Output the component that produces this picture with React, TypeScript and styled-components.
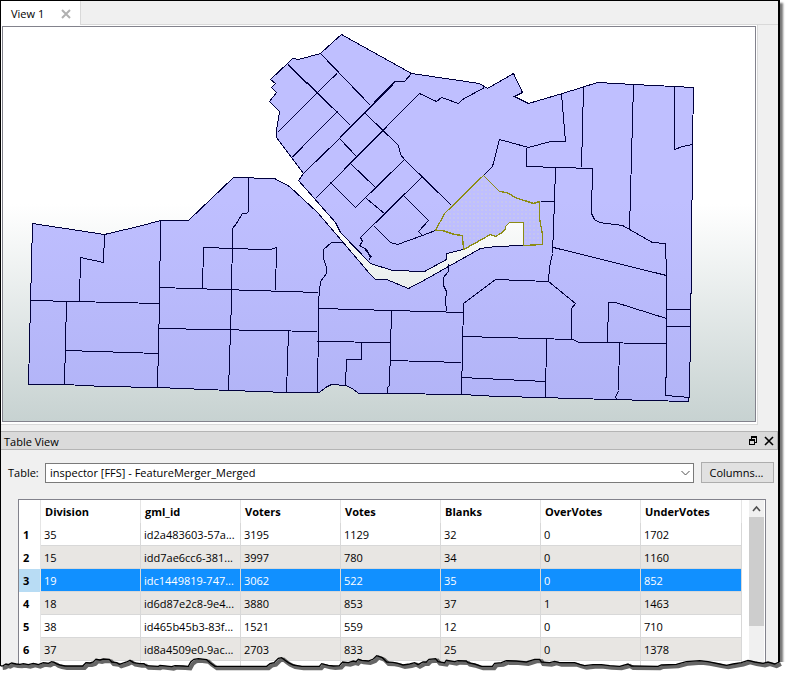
import React from 'react';
import styled, { createGlobalStyle } from 'styled-components';

const GlobalStyle = createGlobalStyle`
  * { box-sizing: border-box; }
  body { margin: 0; background: #fff; overflow-x: hidden; }
  body, button, select, input { font-family: 'Open Sans', 'Noto Sans', sans-serif; font-size: 11px; line-height: 16px; color: #000; }
`;

const Page = styled.main`
  position: relative;
  padding-right: 6px;
`;

const Window = styled.div`
  background: #f0f0f0;
  border: solid #000;
  border-width: 1px 2px 0 1px;
  box-shadow: 3px 3px 2px #777;
`;

const TabBar = styled.div`
  display: flex;
  height: 24px;
  border-bottom: 1px solid #d9d9d9;
`;

const Tab = styled.div`
  display: flex;
  align-items: center;
  justify-content: space-between;
  width: 80px;
  height: 24px;
  padding: 2px 9px 0 10px;
  background: #fff;
  border-right: 1px solid #d9d9d9;
`;

const TabButton = styled.button`
  padding: 0;
  border: 0;
  background: none;
`;

const IconButton = styled.button`
  display: flex;
  align-items: center;
  justify-content: center;
  width: 10px;
  height: 10px;
  padding: 0;
  border: 0;
  background: none;
`;

const ViewPane = styled.section`
  margin-right: 20px;
  padding: 1px 1px 2px;
  background: #fff;
  border-right: 1px solid #d9d9d9;
  border-bottom: 1px solid #d9d9d9;
`;

const Canvas = styled.div`
  border: 1px solid #82828c;
  background: linear-gradient(#fff 45%, #c7d2d1);
`;

const MapDrawing = styled.svg`
  display: block;
  width: 100%;
  height: auto;
`;

const DockTitle = styled.header`
  display: flex;
  align-items: center;
  justify-content: space-between;
  height: 19px;
  margin-top: 6px;
  padding: 0 3px;
  background: #dadada;
  border: solid #b4b4b4;
  border-width: 1px 1px 1px 0;
`;

const DockName = styled.h2`
  margin: 2px 0 0;
  font-size: 11px;
  font-weight: 400;
`;

const DockButtons = styled.div`
  display: flex;
  gap: 6px;
`;

const Toolbar = styled.div`
  display: flex;
  align-items: center;
  margin: 12px 4px 0 7px;
  height: 21px;
`;

const FieldLabel = styled.label`
  width: 37px;
`;

const SelectWrap = styled.div`
  position: relative;
  flex: 1;
`;

const TableSelect = styled.select`
  display: block;
  appearance: none;
  width: 100%;
  height: 20px;
  padding: 1px 20px 0 4px;
  border: 1px solid #7a7a7a;
  border-radius: 0;
  background: #fff;
`;

const SelectArrow = styled.svg`
  position: absolute;
  right: 4px;
  top: 7px;
  pointer-events: none;
`;

const ColumnsButton = styled.button`
  width: 73px;
  height: 21px;
  margin-left: 7px;
  padding: 0 2px 0 0;
  border: 1px solid #adadad;
  background: #e1e1e1;
`;

const GridFrame = styled.div`
  display: flex;
  margin: 16px 12px 0 17px;
  height: 172px;
  overflow: hidden;
  border: solid #82828c;
  border-width: 1px 1px 0;
  background: #fff;
`;

const GridArea = styled.div`
  flex: 1;
  overflow: hidden;
`;

const Grid = styled.table`
  table-layout: fixed;
  width: 723px;
  border-collapse: separate;
  border-spacing: 0;
`;

const SizedCol = styled.col<{ $width?: number }>`
  width: ${p => (p.$width ? `${p.$width}px` : 'auto')};
`;

const ColumnHead = styled.th`
  height: 23px;
  padding: 1px 4px 0;
  border-right: 1px solid #e5e5e5;
  font-weight: 700;
  text-align: left;
`;

const Row = styled.tr<{ $shaded?: boolean; $selected?: boolean }>`
  background: ${p => (p.$selected ? '#1190ff' : p.$shaded ? '#e8e6e3' : '#fff')};
  color: ${p => (p.$selected ? '#fff' : '#000')};
`;

const RowHead = styled.th<{ $selected?: boolean }>`
  height: 23px;
  padding: 0 6px 0 4px;
  border-right: 1px solid #e5e5e5;
  background: ${p => (p.$selected ? '#b8dcf4' : '#fff')};
  color: #000;
  font-weight: 700;
  text-align: left;
`;

const Cell = styled.td`
  height: 23px;
  padding: 1px 3px 0;
  border: solid #d8d8d8;
  border-width: 0 1px 1px 0;
  overflow: hidden;
  white-space: nowrap;
`;

const ScrollBar = styled.div`
  width: 16px;
  border-right: 1px solid #fff;
  background: #f0f0f0;
`;

const ScrollUp = styled.button`
  display: flex;
  align-items: center;
  justify-content: center;
  width: 15px;
  height: 17px;
  padding: 0;
  border: 0;
  background: #f0f0f0;
`;

const ScrollThumb = styled.div`
  height: 109px;
  background: #cdcdcd;
`;

const TornEdge = styled.svg`
  position: absolute;
  left: 0;
  bottom: -3px;
  width: 100%;
  height: 24px;
`;

const OUTLINE =
  'M32 223L104 234L142 225L160 220L188 220L233 177L274 178L289 186L317 212L341 240L369 273L375 279L386 279L408 288L425 279L448 266L480 248L495 246L523 245V222H509L505 226V229L500 233L495 236L490 234L465 248L463 249L446 253V259L424 271L392 270L370 263L340 232L335 222L298 180L303 173L291 157L276 137V130L279 111L269 101L276 92L271 87L275 83L270 79L287 63L292 58L298 59L320 53L333 41L341 34L411 73L479 83L487 88L513 73L522 92L514 96L528 103L562 93L597 82L633 84L674 86L693 87L692 143L691 260L690 328L689 397H688V401L647 400L615 399L570 398L545 397L497 396L461 394L387 393L358 393L352 388L345 385L331 384L325 387L319 392H287L230 390L157 387L103 386L64 384H28L30 303Z';

const BOUNDARIES = [
  'M104 234L103 262L80 257L79 301',
  'M31 300L159 303',
  'M66 302L64 384',
  'M66 350L158 353',
  'M160 220L159 303L157 387',
  'M159 287L318 292',
  'M202 288L203 247L262 249H270L276 247L275 290',
  'M248 177V211L246 213H242L236 223L232 228L231 300L228 390',
  'M159 328L317 331',
  'M288 331L286 392',
  'M342 242H331L323 249V258L326 267V273L320 281L318 300L318 323L317 392',
  'M319 308L463 312',
  'M317 341L390 342',
  'M391 310L389 385L387 387V393',
  'M361 342L361 359H346L345 385',
  'M390 360L461 362',
  'M461 394L463 303L495 279L548 281L575 303L571 308V339',
  'M463 336L572 339L579 342L666 343',
  'M461 377L545 381',
  'M546 339L545 397',
  'M607 342L608 302H615L666 318',
  'M619 342L618 390L615 397L617 399',
  'M666 309H690M666 326H690',
  'M689 397L665 395L666 360V274L665 243',
  'M553 247L666 275',
  'M555 167L554 201L552 253L549 267L548 281',
  'M540 201H554',
  'M448 263V271L443 277V285L446 291L445 300L446 311',
  'M561 93L565 141H550L528 147L499 139L492 166L483 175',
  'M526 147V166L592 168L591 213L594 219L599 222L622 225L629 229L652 242L665 243',
  'M583 87L581 167',
  'M633 84L629 229',
  'M674 86V149L682 146L692 144',
  'M435 230L422 235L397 244L390 242L374 226',
  'M422 235L418 231L428 220L404 196',
  'M422 176L360 237L362 241L359 245L366 249L370 257L368 260',
  'M451 205L404 159L400 154L398 145L365 113',
  'M404 159L355 207L330 182',
  'M350 163L375 187',
  'M366 198L385 214',
  'M315 198L419 93L436 101L441 97L458 103L462 99L484 87',
  'M411 73L404 81H394L339 138L303 173',
  'M339 138L356 156',
  'M287 63L350 125',
  'M320 53L370 105',
  'M336 73L277 132',
  'M337 111L291 157',
];

const ACCENTS = [
  'M288 65L307 83',
  'M394 82L340 137',
  'M373 139L344 169',
  'M336 74L332 78',
  'M302 147L292 157',
  'M385 213L375 223',
  'M365 249L371 257',
  'M418 231L422 235',
];

const SELECTED =
  'M483 175L499 191L506 192L517 198L524 200L533 203L539 201V218L542 234V244L523 245V222H509L505 226V229L500 233L495 236L490 234L465 248L463 249L462 235L454 234L442 230H435L444 213Z';

const TEAR: string =
  'M2 48L10 47L18 42L25 44L35 39L48 42L60 43L70 41L85 44L100 40L115 44L130 38L145 40L155 35L163 37L170 42L180 45L195 48L248 48L258 38L270 39L280 36L288 28L300 30L310 27L328 28L335 36L350 38L358 43L380 36L390 31L400 38L420 41L432 41L440 47L475 49L480 46L515 50L525 47L550 48L565 49L572 36L582 28L595 26L620 29L630 38L645 49L800 49L810 41L822 38L835 25L845 23L855 31L865 38L880 45L905 49L958 49L965 41L985 46L1000 48L1018 47L1028 36L1045 38L1060 33L1068 35L1075 28L1085 31L1105 33L1120 27L1130 17L1147 23L1160 36L1179 37L1194 40L1209 45L1229 42L1244 38L1254 44L1269 36L1279 36L1287 28L1307 26L1314 35L1334 38L1339 31L1364 35L1374 32L1399 33L1404 38L1424 42L1444 49L1477 49L1484 40L1504 38L1519 32L1549 33L1579 36L1604 28L1619 28L1624 36L1649 38L1664 34L1679 38L1724 38L1739 43L1754 47L1779 44L1804 44L1829 47L1859 49L1884 42L1894 48L1974 49L1984 45L2029 43L2059 35L2099 32L2124 35L2159 42L2179 46L2199 42L2224 38L2244 31L2264 36L2289 40L2304 36L2324 42L2337 36';

const columns = [
  { name: 'Division', width: 100 },
  { name: 'gml_id', width: 100 },
  { name: 'Voters', width: 100 },
  { name: 'Votes', width: 100 },
  { name: 'Blanks', width: 100 },
  { name: 'OverVotes', width: 100 },
  { name: 'UnderVotes' },
];
const rows = [
  ['35', 'id2a483603-57a...', '3195', '1129', '32', '0', '1702'],
  ['15', 'idd7ae6cc6-381...', '3997', '780', '34', '0', '1160'],
  ['19', 'idc1449819-747...', '3062', '522', '35', '0', '852'],
  ['18', 'id6d87e2c8-9e4...', '3880', '853', '37', '1', '1463'],
  ['38', 'id465b45b3-83f...', '1521', '559', '12', '0', '710'],
  ['37', 'id8a4509e0-9ac...', '2703', '833', '25', '0', '1378'],
];
const selectedRow = 2;

function DivisionMap() {
  return (
    <MapDrawing viewBox="3 27 752 394" role="img" aria-label="Voting divisions">
      <defs>
        <linearGradient id="land" gradientUnits="userSpaceOnUse" x1="0" y1="200" x2="0" y2="400">
          <stop offset="0" stopColor="#bfbfff" />
          <stop offset="1" stopColor="#b2b4f7" />
        </linearGradient>
        <pattern id="dots" width="4" height="4" patternUnits="userSpaceOnUse">
          <rect x="1" y="1" width="1" height="1" fill="#dcdcc4" />
        </pattern>
      </defs>
      <g transform="translate(.5 .5)" shapeRendering="crispEdges" fill="none" stroke="#00003c">
        <path d={OUTLINE} fill="url(#land)" />
        <path d={BOUNDARIES.join('')} />
        <path d={ACCENTS.join('')} strokeWidth="1.4" />
        <path d={SELECTED} fill="url(#dots)" stroke="#8c8c14" strokeWidth="1.3" />
      </g>
    </MapDrawing>
  );
}

function AttributeTable() {
  return (
    <Grid>
      <colgroup>
        <SizedCol $width={22} />
        {columns.map(column => <SizedCol key={column.name} $width={column.width} />)}
      </colgroup>
      <thead>
        <tr>
          <ColumnHead as="td" />
          {columns.map(({ name }) => <ColumnHead key={name} scope="col">{name}</ColumnHead>)}
        </tr>
      </thead>
      <tbody>
        {rows.map((row, i) => (
          <Row key={row[1]} $shaded={i % 2 === 1} $selected={i === selectedRow}>
            <RowHead scope="row" $selected={i === selectedRow}>{i + 1}</RowHead>
            {row.map((value, c) => <Cell key={columns[c].name}>{value}</Cell>)}
          </Row>
        ))}
        <Row>
          <RowHead as="td" />
          {columns.map(({ name }) => <Cell key={name} />)}
        </Row>
      </tbody>
    </Grid>
  );
}

export default function App() {
  return (
    <>
      <GlobalStyle />
      <Page>
        <Window>
          <TabBar>
            <Tab>
              <TabButton>View 1</TabButton>
              <IconButton aria-label="Close view">
                <svg width="10" height="10" viewBox="0 0 10 10" stroke="#b0b0b0" strokeWidth="2">
                  <path d="M1 1L9 9M9 1L1 9" />
                </svg>
              </IconButton>
            </Tab>
          </TabBar>
          <ViewPane>
            <Canvas>
              <DivisionMap />
            </Canvas>
          </ViewPane>
          <DockTitle>
            <DockName>Table View</DockName>
            <DockButtons>
              <IconButton aria-label="Float panel">
                <svg width="10" height="10" viewBox="0 0 10 10" fill="none" stroke="#000" shapeRendering="crispEdges">
                  <path d="M3 1.500H9M3 .5H9M3.500 1V4M8.500 1V6.500H6M1 4.500H7M1 3.500H7M1.500 4V8.500H6.500V4" />
                </svg>
              </IconButton>
              <IconButton aria-label="Close panel">
                <svg width="10" height="10" viewBox="0 0 10 10" stroke="#000" strokeWidth="1.600">
                  <path d="M1 1L9 9M9 1L1 9" />
                </svg>
              </IconButton>
            </DockButtons>
          </DockTitle>
          <Toolbar>
            <FieldLabel htmlFor="table-name">Table:</FieldLabel>
            <SelectWrap>
              <TableSelect id="table-name">
                <option>inspector [FFS] - FeatureMerger_Merged</option>
              </TableSelect>
              <SelectArrow width="9" height="6" viewBox="0 0 9 6" fill="none" stroke="#505050">
                <path d="M.5 1L4.500 5L8.500 1" />
              </SelectArrow>
            </SelectWrap>
            <ColumnsButton>Columns...</ColumnsButton>
          </Toolbar>
          <GridFrame>
            <GridArea>
              <AttributeTable />
            </GridArea>
            <ScrollBar>
              <ScrollUp aria-label="Scroll up">
                <svg width="9" height="7" viewBox="0 0 9 7" fill="none" stroke="#505050" strokeWidth="1.600">
                  <path d="M1 6L4.500 2L8 6" />
                </svg>
              </ScrollUp>
              <ScrollThumb />
            </ScrollBar>
          </GridFrame>
        </Window>
        <TornEdge viewBox="0 0 2358 72" preserveAspectRatio="none" aria-hidden="true">
          <defs>
            <filter id="soft" x="-1%" y="-50%" width="102%" height="200%">
              <feGaussianBlur stdDeviation="2" />
            </filter>
          </defs>
          <path d={`${TEAR}H2358V80H-9V48Z`} fill="#fff" />
          <g fill="none">
            <path d={TEAR} transform="translate(6 6)" stroke="#666" strokeWidth="12" filter="url(#soft)" />
            <path d={`${TEAR}V-4`} stroke="#000" strokeWidth="4" />
          </g>
        </TornEdge>
      </Page>
    </>
  );
}
